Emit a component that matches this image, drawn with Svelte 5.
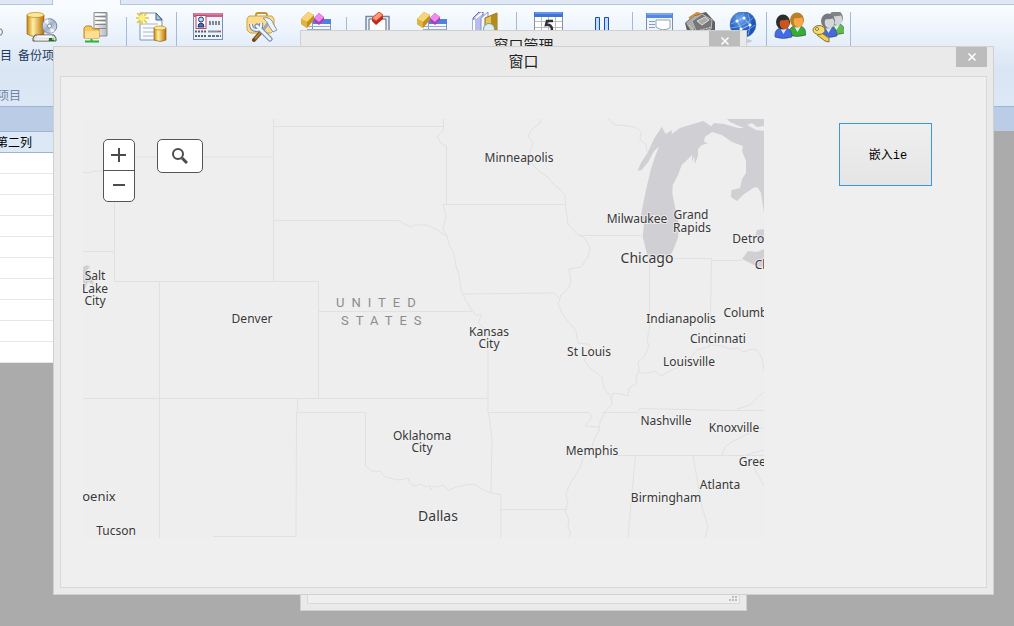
<script lang="ts">
    type Tool = { icon: string; title: string; label?: string };
    type Group = { tools: Tool[]; caption?: string; size?: string; short?: boolean };

    const groups: Group[] = [
        {
            caption: '项目',
            size: 'first',
            short: true,
            tools: [
                { icon: 'restore', title: '还原项目', label: '还原项目' },
                { icon: 'backup', title: '备份项目', label: '备份项目' },
                { icon: 'server', title: '服务器' }
            ]
        },
        { size: 'narrow', tools: [{ icon: 'newdata', title: '新建' }] },
        {
            short: true,
            tools: [
                { icon: 'card', title: '用户卡片' },
                { icon: 'toolbox', title: '工具箱' },
                { icon: 'blocks', title: '组件' }
            ]
        },
        {
            tools: [
                { icon: 'frame', title: '窗体' },
                { icon: 'blocks', title: '模块' },
                { icon: 'books', title: '资料' }
            ]
        },
        {
            tools: [
                { icon: 'calendar', title: '日历' },
                { icon: 'pause', title: '暂停' }
            ]
        },
        {
            size: 'narrow',
            tools: [
                { icon: 'report', title: '报表' },
                { icon: 'chip', title: '设备' },
                { icon: 'globe', title: '网络' }
            ]
        },
        {
            size: 'tight',
            tools: [
                { icon: 'users', title: '用户' },
                { icon: 'keys', title: '权限' }
            ]
        }
    ];

    const rows = Array.from({ length: 10 }, (_, i) => i);

    const borders = [
        'M83 172 L88 173 L94 171 L104 171',
        'M135 157 H273 M273.5 119 V281',
        'M114.500 200 V281.500 H318.500 V398',
        'M83 251.500 H114',
        'M159.500 281 V538',
        'M83 398.500 H487',
        'M273 126.500 H443',
        'M273 220.500 H399 L404 224 L411 227 L414 225 L427 225 L438 230 L443 234 L447 236',
        'M318 311.500 H472',
        'M297.500 398 V412 M296.500 412.500 H365.500 V466 L372 471 L376 472 L380 471 L385 477 L394 479 L399 480 L404 479 L408 478 L410 483 L414 486 L420 484 L426 487 L430 485 L431 490 L434 486 L438 487 L442 485 L449 490 L456 487 L466 485 L474 484 L482 489 L491 493 L501 494.500 V538',
        'M296.500 412 L296 536.500 H213',
        'M443.500 119 V130 L437 137 L441 143 L446.500 146 V204',
        'M443 204.500 H565',
        'M443 204 L446 216 L443 229 L447 236 L449 244 L454 254 L456 266 L459 275 L461 290 L465 299 L472 311 L476 315 L482 315 L478 322 L484 328 L488 336 V412 L490 422 L492 440 L491 492',
        'M463 294 L554 293 L560 299',
        'M541 119 L540 123 L532 129 L528 136 L533 143 L530 152 L531 163 L540 172 L549 178 L552 183 L561 190 L565 196 L566 210 L568 224 L577 234 L585 238 L590 248 L588 257 L581 267 L569 269 L571 282 L568 289 L561 295 L558 304 L563 315 L576 331 L578 343 L588 344 L592 348 L584 360 L589 367 L602 377 L604 388 L611 397 L612 404 L605 412 L600 422 L599 431 L594 440 L591 450 L583 458 L580 468 L575 476 L570 484 L566 494 L568 503 L565 510 L569 520 L568 528 L571 533 L568 537',
        'M608 119 L615 125 L629 126 L637 128 L641 132 L640 140 L646 144 L647 153',
        'M579 235.500 H642',
        'M649.500 262 V328 L647 340 L649 346 L644 357 L638 362 L639 370 L636 377 L637 383 L629 388 L628 396 L620 394 L613 393 L611 400',
        'M639 373 L648 373 L655 371 L661 376 L671 370 L677 368 L682 365 L691 357 L697 350 L710 346 L711.500 258.500 H668',
        'M711 260.500 H742',
        'M712 345 L722 346 L730 349 L738 348 L743 352 L752 349 L757 350 L762 358 L764 371',
        'M602 412.500 H638 L640 408.500 L730 410.500 H764',
        'M737 409 L750 405 L758 397 L764 392',
        'M488 412.500 H589 L592 417 L585 426 L599 427',
        'M597 455.500 H764',
        'M635.500 455 L628 537',
        'M693 455 L702 507 L708 526 L705 538',
        'M722 455 L725 447 L733 441 L742 437 L753 431 L764 427',
        'M746 455 L764 450 M754 468 L764 486',
        'M501 509.500 H567'
    ];

    const cities = [
        { name: 'Minneapolis', x: 519, y: 162 },
        { name: 'Milwaukee', x: 637, y: 223 },
        { name: 'Grand', x: 691, y: 219 },
        { name: 'Rapids', x: 692, y: 232 },
        { name: 'Salt', x: 95, y: 280 },
        { name: 'Lake', x: 95, y: 293 },
        { name: 'City', x: 95, y: 305 },
        { name: 'Denver', x: 252, y: 323 },
        { name: 'Kansas', x: 489, y: 336 },
        { name: 'City', x: 489, y: 348 },
        { name: 'St Louis', x: 589, y: 356 },
        { name: 'Indianapolis', x: 681, y: 323 },
        { name: 'Cincinnati', x: 718, y: 343 },
        { name: 'Columbus', x: 752, y: 317 },
        { name: 'Louisville', x: 689, y: 366 },
        { name: 'Detroit', x: 752, y: 243 },
        { name: 'Cleveland', x: 782, y: 269 },
        { name: 'Oklahoma', x: 422, y: 440 },
        { name: 'City', x: 422, y: 452 },
        { name: 'Nashville', x: 666, y: 425 },
        { name: 'Knoxville', x: 734, y: 432 },
        { name: 'Memphis', x: 592, y: 455 },
        { name: 'Greenville', x: 767, y: 466 },
        { name: 'Atlanta', x: 720, y: 489 },
        { name: 'Birmingham', x: 666, y: 502 },
        { name: 'Tucson', x: 116, y: 535 },
        { name: 'Chicago', x: 647, y: 263, big: true },
        { name: 'Dallas', x: 438, y: 521, big: true },
        { name: 'Phoenix', x: 91, y: 501, mid: true }
    ];

    let zoom = $state(4);
</script>

{#snippet person(x: number, y: number, hair: string, face: string, shirt: string)}
    <g transform="translate({x} {y})">
        <path d="M0 22 Q-1 14 6 13 H11 Q17 14 17 22 Q8 25 0 22Z" fill={shirt} stroke="#345" stroke-width=".6" />
        <path d="M5 13 L8.500 19 L12 13Z" fill="#d9f1ff" />
        <ellipse cx="8" cy="7" rx="7" ry="7.500" fill={hair} />
        <ellipse cx="9.500" cy="8.500" rx="4.800" ry="5.800" fill={face} />
        <path d="M4 5 Q8 0 14 4 Q9 6 4 5Z" fill={hair} />
    </g>
{/snippet}

{#snippet icon(name: string)}
    <svg class="icon" viewBox="0 0 32 32" aria-hidden="true">
        {#if name === 'restore'}
            <circle cx="27" cy="20" r="3.500" fill="#eee" stroke="#777" />
        {:else if name === 'backup'}
            <path d="M1 3 V22 Q9 27 18 22 V3Z" fill="url(#gold)" stroke="#9a6510" stroke-width=".7" />
            <ellipse cx="9.500" cy="3" rx="8.500" ry="2.500" fill="#ffe79a" stroke="#b8860b" stroke-width=".7" />
            <circle cx="23.500" cy="14" r="7.300" fill="url(#disc)" stroke="#7787a0" />
            <path d="M23 14 L18 9 L22 7Z M24 15 L29 19 L25 21Z" fill="#fff" opacity=".8" />
            <circle cx="23.500" cy="14" r="2" fill="#fff" stroke="#889" />
            <path d="M9 23 H28 L30 26 V29 H7 V26Z" fill="#ddd" stroke="#555" />
            <path d="M11 24.500 H26" stroke="#fff" stroke-width="2" />
            <path d="M9 27.500 H22" stroke="#eee" stroke-width="2" />
            <rect x="23" y="26" width="5" height="3" fill="#246c24" />
            <rect x="26" y="26" width="2" height="2" fill="#5ee34d" />
        {:else if name === 'server'}
            <path d="M14 0.500 H27 V24 H14Z" fill="url(#steel)" stroke="#8b8f94" />
            <path d="M15 4.500 H26 M15 8.500 H26 M15 12.500 H26 M15 16.500 H26" stroke="#888" />
            <path d="M16 2.500 H25 M16 6.500 H25 M16 10.500 H25" stroke="#fff" />
            <path d="M4 16 L6 14 H11 L13 17 H19 V26 H4Z" fill="#f6c961" stroke="#bd8426" />
            <path d="M5 19 H19 V26 H5Z" fill="#ffdf8d" />
            <path d="M11.500 27 V29 M5 29.500 H19" stroke="#2bb52b" stroke-width="2" />
        {:else if name === 'newdata'}
            <path d="M4 1 H20 L26 7 V28 H4Z" fill="#f8fbff" stroke="#8095ad" />
            <path d="M20 1 V8 H26Z" fill="#a8c9e5" stroke="#41627e" />
            <path d="M7 12 H22 M7 16 H22 M7 20 H20 M7 24 H17" stroke="#a8b4c8" />
            <path d="M6 0 V13 M0 6 H13 M1 1 L11 11 M11 1 L1 11" stroke="#e7c52b" stroke-width="1.500" />
            <circle cx="6" cy="6" r="3" fill="#fff278" />
            <path d="M18 16 V28 Q24 31 30 28 V16Z" fill="url(#gold)" stroke="#9a6510" stroke-width=".7" />
            <ellipse cx="24" cy="16" rx="6" ry="2" fill="#ffe79a" stroke="#b8860b" stroke-width=".7" />
        {:else if name === 'card'}
            <rect x="1.500" y="1.500" width="29" height="26" fill="#edf3fb" stroke="#7a8fb3" />
            <path d="M1 1 H31 V5 H1Z" fill="#c95f86" />
            <path d="M2 2 H30" stroke="#e49ab4" />
            <rect x="4" y="3.500" width="10" height="13" fill="#fff" stroke="#c33f6b" />
            <circle cx="9" cy="7.500" r="2.500" fill="#c2d4f2" stroke="#26325f" />
            <path d="M6 15 Q6 11 9 11 Q12 11 12 15Z" fill="#426fc9" stroke="#23375f" />
            <path d="M17 10 H28 M17 12 H28" stroke="#5c6270" stroke-width="1.500" stroke-dasharray="2 1" />
            <path d="M3 19.500 H14 M3 24 H14" stroke="#555e70" stroke-width="2" stroke-dasharray="2 1" />
            <path d="M16 19.500 H29" stroke="#8590a6" stroke-width="2" />
            <path d="M16 24 H29" stroke="#666e80" stroke-width="2" stroke-dasharray="3 1" />
            <path d="M26 19.500 H29" stroke="#cc4764" />
        {:else if name === 'toolbox'}
            <path d="M10 5 V3 Q10 1 12 1 H19 Q21 1 21 3 V5" fill="none" stroke="#c8942c" stroke-width="2" />
            <path d="M3 4 H26 L28 7 V18 L25 21 H4 L1 18 V7Z" fill="#fbdc8d" stroke="#d3a13e" />
            <path d="M8 28 L15 20" stroke="#68481c" stroke-width="4" stroke-linecap="round" />
            <path d="M9 27 L15 20" stroke="#b2832f" stroke-width="2" />
            <path d="M17 18 L24 9" stroke="#9ba9bd" stroke-width="3" />
            <path d="M17 6 Q25 4 28 13 L31 18 L27 20 L23 14 Q21 9 17 6Z" fill="#edf3fa" stroke="#8794a8" />
            <path d="M24 27 L11 14" stroke="#7386ac" stroke-width="5" stroke-linecap="round" />
            <path d="M5 12 Q5 18 11 18 Q16 17 15 11" fill="none" stroke="#7386ac" stroke-width="4" />
            <path d="M24 27 L11 14" stroke="#eef4ff" stroke-width="3" stroke-linecap="round" />
            <path d="M5 12 Q5 18 11 18 Q16 17 15 11" fill="none" stroke="#eef4ff" stroke-width="2" />
        {:else if name === 'blocks'}
            <rect x="12.500" y="7.500" width="18" height="21" fill="#f5f9ff" stroke="#8a99b7" />
            <path d="M13 7 H31 V12 H13Z" fill="#4d83df" />
            <path d="M7 14.500 H30 M7 17.500 H30" stroke="#9aadcf" />
            <path d="M8 0 L14 3 V8 L7 16 L1 12 V7Z" fill="#c48e1b" />
            <path d="M8 0 L14 3 L7 10 L1 7Z" fill="#f6d678" />
            <path d="M1 7 L7 10 V16 L1 12Z" fill="#e2b23f" />
            <path d="M19 1 L24 5 V8 L19 13 L14 9 V6Z" fill="#a83fb7" />
            <path d="M19 1 L24 5 L19 10 L14 6Z" fill="#f08bee" />
        {:else if name === 'frame'}
            <path d="M4 4.500 H27 V28 H4Z" fill="#eef3f8" stroke="#7589aa" stroke-width="1.500" />
            <path d="M7 7 H24 V28 H7Z" fill="#fff" stroke="#59616f" />
            <path d="M17 0 L21 3 V7 L14 13 L10 9 V6Z" fill="#b92c13" />
            <path d="M17 0 L21 3 L14 9 L10 6Z" fill="#ff977d" stroke="#d94d2c" />
        {:else if name === 'books'}
            <path d="M3 6 L9 0 H13 V29 H3Z" fill="#b7bdf0" stroke="#6369aa" />
            <path d="M6 6 L12 1 M4 8 V28" stroke="#fff" stroke-width="2" />
            <path d="M11 6 L18 0 V29 H11Z" fill="#f3f5ff" stroke="#8b91c4" />
            <path d="M15 6 L27 1 V29 H15Z" fill="#e5c35d" stroke="#8f701d" />
            <path d="M21 4 L27 1 V29 H21Z" fill="#b48a19" />
            <circle cx="19" cy="17" r="5.500" fill="#dceef4" stroke="#7b99a8" />
        {:else if name === 'calendar'}
            <rect x="2.500" y="0.500" width="28" height="28" fill="#fff" stroke="#8c9098" />
            <path d="M2 0 H31 V5 H2Z" fill="#3f73d6" />
            <path d="M3 1 H30" stroke="#8fb7ff" />
            <path d="M3 9.500 H30 M3 15.500 H30 M9.500 5 V28 M16.500 5 V28 M23.500 5 V28" stroke="#bbb" />
            <path d="M21 9 H15 L14 13 Q20 12 20 18 Q19 21 13 20" fill="none" stroke="#2c3038" stroke-width="2.500" />
        {:else if name === 'pause'}
            <path d="M9.500 5.500 H13.500 V28 H9.500Z M18.500 5.500 H22.500 V28 H18.500Z" fill="#bddcff" stroke="#174bb6" />
        {:else if name === 'report'}
            <rect x="4.500" y="1.500" width="26" height="27" fill="#edf4fd" stroke="#838b9c" />
            <path d="M4 1 H31 V6 H4Z" fill="#5588e2" />
            <path d="M5 2 H30" stroke="#9dc1ff" />
            <path d="M7 9.500 H13 M7 12.500 H13 M7 15.500 H13" stroke="#8f9bb0" />
            <path d="M14 8 H28 V16 Q20 20 14 15Z" fill="#fff" stroke="#96a4b8" />
        {:else if name === 'chip'}
            <path d="M1 11 L10 3 L22 0 L31 10 V19 L18 28 L4 23Z" fill="#5f6060" />
            <path d="M2 11 L10 4 L20 2 L12 12 L9 22Z" fill="#aaa" />
            <path d="M8 9 L18 2 L28 8 L27 17 L13 21Z" fill="#777" stroke="#bbb" />
            <path d="M5 6 L13 1 L17 2" fill="none" stroke="#df8a2a" stroke-width="2" />
            <path d="M13 9 L21 5 L25 8 L18 13Z" fill="#aaa" stroke="#ddd" />
            <path d="M13 19 L28 15 M5 13 L10 19" stroke="#ddd" stroke-dasharray="2 1" />
        {:else if name === 'globe'}
            <ellipse cx="17" cy="29" rx="9" ry="2" fill="#c3cbd5" />
            <circle cx="17" cy="12.500" r="13" fill="url(#world)" stroke="#5b80b7" stroke-width=".5" />
            <path d="M5 12 Q12 10 18 1 M5 16 Q17 15 27 6 M8 21 Q17 23 29 13 M10 3 Q14 11 18 25 M22 2 Q26 12 22 23" fill="none" stroke="#6ea5ed" />
            <path d="M11 9 L18 6 L24 13 L15 17Z" fill="none" stroke="#9cc6ff" />
            <g fill="#fff">
                <circle cx="11" cy="9" r="1.500" />
                <circle cx="18" cy="6" r="1.500" />
                <circle cx="24" cy="13" r="1.500" />
                <circle cx="15" cy="17" r="1.500" />
            </g>
        {:else if name === 'users'}
            {@render person(15, 1, '#b98027', '#f9a643', '#37ad32')}
            {@render person(1, 3, '#292b2d', '#cb541c', '#426be8')}
        {:else if name === 'keys'}
            {@render person(16, -1, '#808487', '#d3d6d8', '#65b953')}
            {@render person(8, 2, '#777b7f', '#d4d7da', '#4669dc')}
            <path d="M8 20 L17 26 V30 L13 29 L5 23" fill="#ecd15a" stroke="#8c7226" />
            <ellipse cx="7" cy="18" rx="6" ry="4.500" fill="#f3dc70" stroke="#8c7226" />
            <circle cx="5" cy="17" r="1.500" fill="#fff" stroke="#8c7226" />
        {/if}
    </svg>
{/snippet}

{#snippet closeButton()}
    <button class="close" aria-label="关闭">
        <svg viewBox="0 0 10 10" aria-hidden="true"><path d="M1.500 1.500 L8.500 8.500 M8.500 1.500 L1.500 8.500" /></svg>
    </button>
{/snippet}

<svg class="defs" aria-hidden="true">
    <defs>
        <linearGradient id="gold">
            <stop offset="0" stop-color="#c98611" />
            <stop offset=".35" stop-color="#fff0a5" />
            <stop offset="1" stop-color="#b96d07" />
        </linearGradient>
        <linearGradient id="steel">
            <stop offset="0" stop-color="#f7f7f7" />
            <stop offset="1" stop-color="#b5b8bc" />
        </linearGradient>
        <linearGradient id="disc" x2="1" y2="1">
            <stop offset="0" stop-color="#fff" />
            <stop offset=".5" stop-color="#9fb3cf" />
            <stop offset="1" stop-color="#eef" />
        </linearGradient>
        <radialGradient id="world" cx=".4" cy=".3">
            <stop offset="0" stop-color="#75adf1" />
            <stop offset="1" stop-color="#1c54b3" />
        </radialGradient>
    </defs>
</svg>

<div class="desktop">
    <div class="tabs"><span class="tab"></span></div>
    <div class="ribbon">
        {#each groups as group}
            <section class="group {group.size ?? ''}" class:short={group.short}>
                <div class="tools">
                    {#each group.tools as tool}
                        <button class="tool" title={tool.title} aria-label={tool.title}>
                            {@render icon(tool.icon)}
                            {#if tool.label}<span>{tool.label}</span>{/if}
                        </button>
                    {/each}
                </div>
                {#if group.caption}<div class="caption">{group.caption}</div>{/if}
            </section>
        {/each}
    </div>
    <div class="band"></div>
    <table class="list">
        <thead>
            <tr><th>第二列</th></tr>
        </thead>
        <tbody>
            {#each rows as row (row)}
                <tr><td></td></tr>
            {/each}
        </tbody>
    </table>

    <section class="window manager">
        <header><h2>窗口管理</h2>{@render closeButton()}</header>
        <div class="client">
            <svg class="grip" viewBox="0 0 8 5" aria-hidden="true">
                <path d="M3 0h2v2h-2z M6 0h2v2h-2z M0 3h2v2h-2z M3 3h2v2h-2z M6 3h2v2h-2z" />
            </svg>
        </div>
    </section>

    <section class="window front">
        <header><h2>窗口</h2>{@render closeButton()}</header>
        <div class="client content">
            <div class="map">
                <svg class="basemap" viewBox="83 119 681 419" preserveAspectRatio="xMinYMin slice" data-zoom={zoom}>
                    <g class="water">
                        <path d="M661.700 126.700 L665.700 134 L671.700 130 L671.700 134 L680 128 L693 124 L703.300 121 L711.700 126.700 L712.700 131.700 L705 136.700 L704 141.700 L708 143.300 L701.700 145 L698 149 L698 156 L695 164 L694 156 L692 162 L692 155 L688 159 L681.700 165 L678 175 L672.700 185 L672.300 193.300 L675 206.700 L678.300 220 L678.300 236.700 L673.300 250 L668 258.300 H648.300 L646 250 L642.700 236.700 L644 223.300 L641 215 L643.300 203.300 L646 190 L650.700 170 L655 156.700 L659 146.700 L654 151 L648.300 161.700 L641.700 170 L637.700 170.700 L640.700 163.300 L647.300 153.300 L654 139Z" />
                        <path d="M711 127 L714 123 L724 124 L738 128 L744 128 L730 122 L727 119 H764 V213 L761 193 L758 188 L755 187 L750 190 L743 195 L737 201 L731 197 L731.500 190 L740 188 L742 179 L746 173 L746 161 L742 151 L743 146 L732 142 L722 135 L712 132Z" />
                        <path d="M755 236 L757 230 L764 229 V243 L757 239Z M742 259 L748 251 L757 252 L764 249 V268 L754 265Z" />
                        <path d="M83 267 L87 265 L90 267 L87 270 L91 276 L94 279 L93 285 L88 282 L85 289 L83 288Z" />
                    </g>
                    <path class="islands" d="M747 125 L752 123 L757 127 L764 126 V131 L756 130Z" />
                    <path class="border" d={borders.join(' ')} />
                    <g class="country">
                        <text x="336" y="307">UNITED</text>
                        <text x="341" y="325">STATES</text>
                    </g>
                    {#each cities as city}
                        <text class="city" class:big={city.big} class:mid={city.mid} x={city.x} y={city.y}>{city.name}</text>
                    {/each}
                </svg>
                <div class="controls">
                    <div class="zoom">
                        <button aria-label="放大" onclick={() => zoom++}>
                            <svg viewBox="0 0 16 16" aria-hidden="true"><path d="M0 8 H15 M8 1 V15" /></svg>
                        </button>
                        <button aria-label="缩小" onclick={() => zoom--}>
                            <svg viewBox="0 0 16 16" aria-hidden="true"><path d="M2 7 H14" /></svg>
                        </button>
                    </div>
                    <button class="search" aria-label="搜索">
                        <svg viewBox="0 0 16 16" aria-hidden="true"><circle cx="6" cy="6" r="5" /><path class="handle" d="M10 10 L15 15" /></svg>
                    </button>
                </div>
            </div>
            <button class="embed">嵌入<span>ie</span></button>
        </div>
    </section>
</div>

<style>
    :global(body) { margin: 0; background: #ababab; }
    button { padding: 0; border: 0; background: none; font: inherit; color: inherit; }
    .defs { position: absolute; width: 0; height: 0; }
    .desktop { position: relative; height: 100vh; overflow: hidden; background: #ababab; color: #000; font: 12px/16px "Noto Sans CJK SC", sans-serif; }

    .tabs { height: 5px; box-sizing: border-box; border-bottom: 1px solid #b0c6e0; background: #dfe8f4; }
    .tab { display: block; width: 67px; height: 5px; margin-left: 52px; border: solid #b0c6e0; border-width: 0 1px; background: #f9fcff; }
    .ribbon { display: flex; height: 102px; box-sizing: border-box; border-bottom: 1px solid #a0b4d1; background: linear-gradient(#fafdff, #e7f0fa 35%, #dae5f4 65%, #dce8f6); }
    .group { position: relative; flex: none; display: flex; flex-direction: column; justify-content: space-between; padding: 7px 4px 3px 4px; color: #1e395b; }
    .group::after { content: ""; position: absolute; right: 0; top: 7px; bottom: 7px; width: 1px; background: #a6bbd3; }
    .group.short::after { top: 12px; }
    .first { margin-left: -109px; padding-left: 70px; }
    .tools { display: flex; }
    .tool { display: flex; flex-direction: column; align-items: center; gap: 3px; width: 54px; white-space: nowrap; }
    .narrow .tool { width: 42px; }
    .tight .tool { width: 38px; }
    .icon { width: 32px; height: 32px; }
    .caption { margin-left: -66px; text-align: center; color: #7185a2; }

    .band { height: 24px; background: #bbcde6; }
    .list { width: 53px; border-collapse: collapse; table-layout: fixed; background: #fff; border-bottom: 1px solid #777; }
    th { height: 20px; padding: 0; border: solid #a0b4d1; border-width: 1px 0; background: #dce8f6; font-weight: 400; text-align: left; text-indent: -4px; line-height: 18px; white-space: nowrap; }
    td { height: 20px; padding: 0; border-bottom: 1px solid #e4e8ee; }

    .window { position: absolute; display: flex; flex-direction: column; box-sizing: border-box; padding: 0 6px 6px; border: 1px solid #d0d0d0; background: #eaeaea; }
    .manager { left: 300px; top: 30px; bottom: 15px; width: 447px; }
    .front { left: 53px; right: 20px; top: 46px; bottom: 31px; }
    header { display: grid; grid-template-columns: 31px 1fr 31px; height: 29px; flex: none; }
    h2 { grid-column: 2; margin: 0; font-size: 15px; font-weight: 400; line-height: 28px; text-align: center; color: #222; }
    .close { display: grid; place-items: center; width: 31px; height: 20px; background: #bcbcbc; }
    .close svg { width: 10px; height: 10px; fill: none; stroke: #fff; stroke-width: 1.6; }
    .client { flex: 1; min-height: 0; border: 1px solid #d9d9d9; background: #efefef; }
    .manager .client { display: flex; align-items: flex-end; justify-content: flex-end; padding: 2px; }
    .grip { width: 8px; height: 5px; fill: #bdbdbd; }

    .content { display: flex; align-items: flex-start; gap: 75px; padding: 42px 54px 49px 22px; }
    .map { position: relative; flex: 1; align-self: stretch; min-width: 0; background: #eee; }
    .basemap { display: block; width: 100%; height: 100%; overflow: hidden; }
    .water { fill: #d0cfd4; }
    .islands { fill: #eee; }
    .border { fill: none; stroke: #e1e1e1; stroke-width: 1; }
    .city { font-family: "Noto Sans", sans-serif; font-size: 12px; fill: #383838; text-anchor: middle; paint-order: stroke; stroke: #f3f3f3; stroke-opacity: 0.7; stroke-width: 2px; }
    .mid { font-size: 13px; }
    .big { font-size: 14px; }
    .country { font-family: Roboto, sans-serif; font-size: 13px; fill: #8c8c8c; letter-spacing: 7px; }

    .controls { position: absolute; left: 20px; top: 20px; display: flex; align-items: flex-start; gap: 22px; }
    .zoom, .search { box-sizing: border-box; border: 1px solid #555; border-radius: 5px; background: #fff; }
    .zoom { width: 32px; overflow: hidden; }
    .zoom button { display: grid; place-items: center; width: 100%; height: 30px; }
    .zoom button + button { height: 31px; border-top: 1px solid #555; }
    .controls svg { width: 16px; height: 16px; fill: none; stroke: #4c4c4c; stroke-width: 2; }
    .search { display: grid; place-items: center; width: 46px; height: 34px; }
    .handle { stroke-width: 3; }

    .embed { flex: none; box-sizing: border-box; width: 93px; height: 63px; margin-top: 4px; padding-left: 5px; border: 1px solid #3399ee; background: linear-gradient(#efefef, #e5e5e5); }
    .embed span { font-family: "Liberation Mono", monospace; }
</style>
